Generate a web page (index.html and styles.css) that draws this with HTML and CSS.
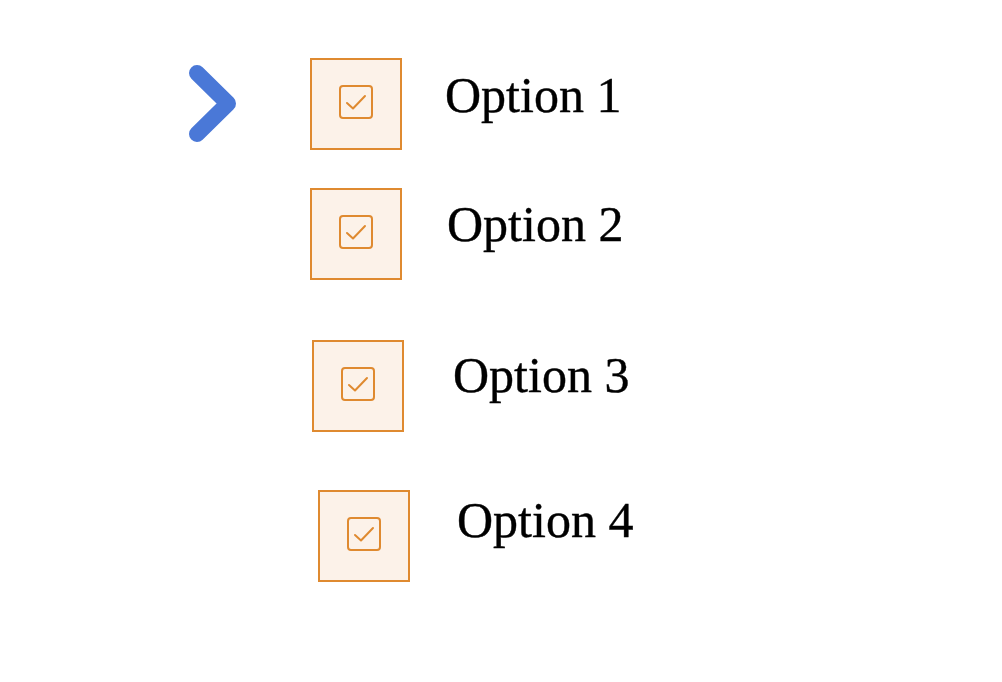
FILE: index.html
```html
<!DOCTYPE html>
<html lang="en">
<head>
  <meta charset="UTF-8">
  <title>Options</title>
  <link rel="stylesheet" href="styles.css">
</head>
<body>
  <div class="menu">
    <!-- Expand arrow -->
    <svg class="arrow" width="48" height="78" viewBox="0 0 48 78">
      <path d="M8 8 L39 38.5 L8 69" fill="none" stroke="#4a78d7" stroke-width="16" stroke-linecap="round" stroke-linejoin="round"/>
    </svg>

    <ul class="options">
      <li class="option option-1">
        <span class="check-box">
          <svg width="34" height="34" viewBox="0 0 34 34">
            <rect x="1" y="1" width="32" height="32" rx="3" fill="none" stroke="#df8a30" stroke-width="2"/>
            <path d="M8 18 L14 23.5 L26 11" fill="none" stroke="#df8a30" stroke-width="2" stroke-linecap="round" stroke-linejoin="round"/>
          </svg>
        </span>
        <span class="label">Option 1</span>
      </li>
      <li class="option option-2">
        <span class="check-box">
          <svg width="34" height="34" viewBox="0 0 34 34">
            <rect x="1" y="1" width="32" height="32" rx="3" fill="none" stroke="#df8a30" stroke-width="2"/>
            <path d="M8 18 L14 23.5 L26 11" fill="none" stroke="#df8a30" stroke-width="2" stroke-linecap="round" stroke-linejoin="round"/>
          </svg>
        </span>
        <span class="label">Option 2</span>
      </li>
      <li class="option option-3">
        <span class="check-box">
          <svg width="34" height="34" viewBox="0 0 34 34">
            <rect x="1" y="1" width="32" height="32" rx="3" fill="none" stroke="#df8a30" stroke-width="2"/>
            <path d="M8 18 L14 23.5 L26 11" fill="none" stroke="#df8a30" stroke-width="2" stroke-linecap="round" stroke-linejoin="round"/>
          </svg>
        </span>
        <span class="label">Option 3</span>
      </li>
      <li class="option option-4">
        <span class="check-box">
          <svg width="34" height="34" viewBox="0 0 34 34">
            <rect x="1" y="1" width="32" height="32" rx="3" fill="none" stroke="#df8a30" stroke-width="2"/>
            <path d="M8 18 L14 23.5 L26 11" fill="none" stroke="#df8a30" stroke-width="2" stroke-linecap="round" stroke-linejoin="round"/>
          </svg>
        </span>
        <span class="label">Option 4</span>
      </li>
    </ul>
  </div>
</body>
</html>
```

FILE: styles.css
```css
body {
  margin: 0;
  padding: 0;
  background-color: #fff;
  color: #000;
  font-family: "Liberation Serif", "Times New Roman", serif;
}

.menu {
  display: flex;
  align-items: flex-start;
  padding: 58px 0 0 189px;
}

.arrow {
  display: block;
  margin-top: 7px;
}

.options {
  list-style: none;
  margin: 0 0 0 73px;
  padding: 0;
  display: flex;
  flex-direction: column;
}

.option {
  display: flex;
  align-items: flex-start;
}

.check-box {
  box-sizing: border-box;
  width: 92px;
  height: 92px;
  padding: 25px 0 0 27px;
  border: 2px solid #df8a30;
  background-color: #fcf2e9;
  flex-shrink: 0;
}

.check-box svg {
  display: block;
}

.label {
  font-size: 50px;
  line-height: 50px;
  white-space: nowrap;
  -webkit-text-stroke: 0.4px #000;
}

/* rows are not quite evenly placed */
.option-1 .label {
  margin: 12px 0 0 43px;
}

.option-2 {
  margin-top: 38px;
}

.option-2 .label {
  margin: 11px 0 0 45px;
}

.option-3 {
  margin-top: 60px;
  margin-left: 2px;
}

.option-3 .label {
  margin: 10px 0 0 49px;
}

.option-4 {
  margin-top: 58px;
  margin-left: 8px;
}

.option-4 .label {
  margin: 5px 0 0 47px;
}
```
